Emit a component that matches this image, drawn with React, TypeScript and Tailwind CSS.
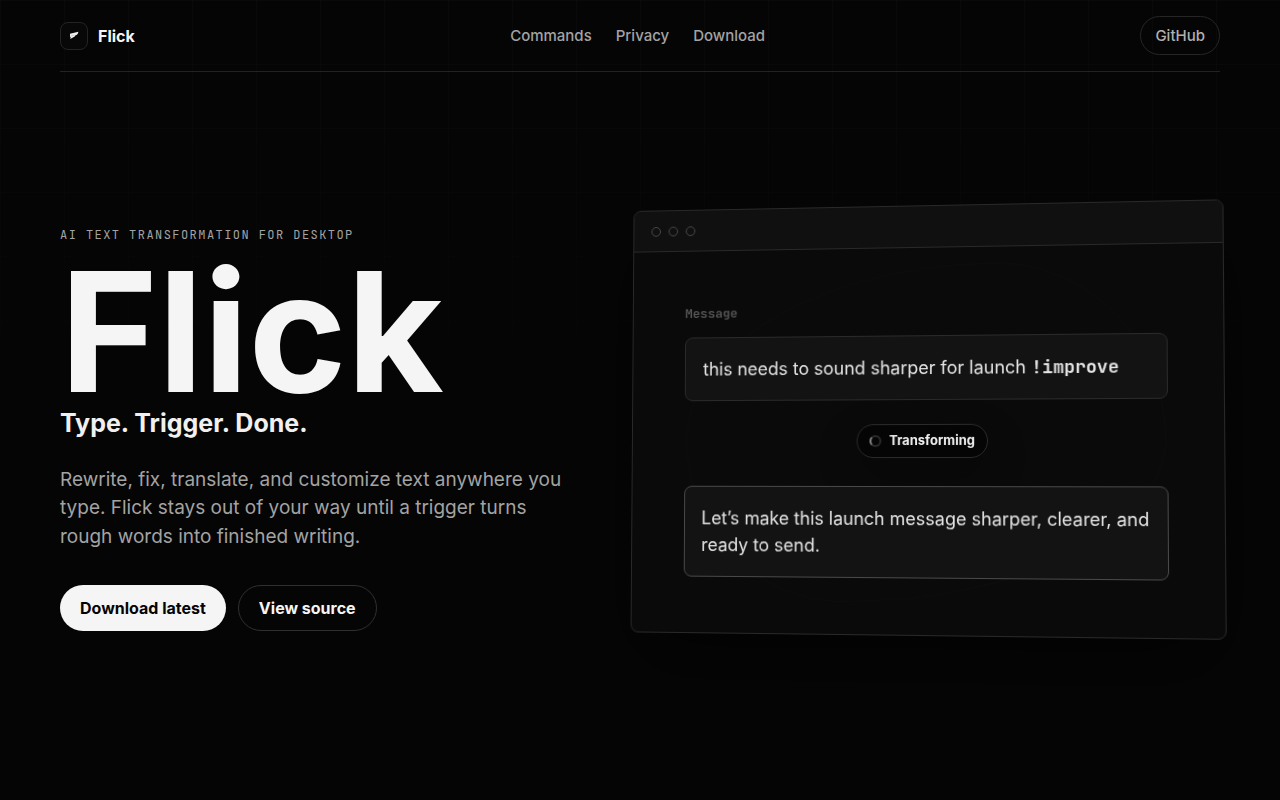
const NAV_LINKS = [
  { label: 'Commands', href: '#commands' },
  { label: 'Privacy', href: '#privacy' },
  { label: 'Download', href: '#download' },
];

const MONO = "font-['JetBrains_Mono','DejaVu_Sans_Mono','Liberation_Mono',monospace]";

function Header() {
  return (
    <header className="flex items-center justify-between h-[72px] border-b border-[#222222]">
      <a href="#top" className="flex items-center gap-2.5 font-bold text-base text-[#f5f5f5]">
        <span className="flex items-center justify-center w-7 h-7 rounded-lg border border-[#242424] bg-[#080808]">
          <svg width="10" height="10" viewBox="0 0 10 10" aria-hidden="true">
            <path d="M1 2.8 L9.4 0.8 C9.1 2.6 8.3 3.8 7 4.3 L6.2 4.5 C5.9 5.5 5.2 6.1 4 6.4 L1.2 8 L1.7 6 L1 5.8 Z" fill="#f0f0f0" />
            <path d="M1.6 5 L5.4 4" stroke="#aaaaaa" strokeWidth="0.5" />
          </svg>
        </span>
        Flick
      </a>
      <nav className="flex gap-6 text-[15px] leading-6 font-medium text-[#a3a3a3]">
        {NAV_LINKS.map((link) => (
          <a key={link.label} href={link.href} className="hover:text-white">
            {link.label}
          </a>
        ))}
      </nav>
      <a
        href="#github"
        className="flex items-center h-[39px] px-3.5 rounded-full border border-[#262626] text-[15px] leading-6 font-medium text-[#b0b0b0] hover:text-white"
      >
        GitHub
      </a>
    </header>
  );
}

function HeroCopy() {
  return (
    <div className="pt-[19px]">
      <p className={`${MONO} text-xs leading-[18px] tracking-[0.12em] uppercase text-[#a3a3a3]`}>
        AI text transformation for desktop
      </p>
      <h1 className="mt-[15px] text-[167px] leading-[144px] font-bold text-[#f5f5f5]">Flick</h1>
      <p className="mt-[3px] text-[25px] leading-[34px] font-bold text-[#f0f0f0]">Type. Trigger. Done.</p>
      <p className="mt-[26px] text-[19px] leading-normal text-[#a3a3a3]">
        Rewrite, fix, translate, and customize text anywhere you type. Flick stays out of your way
        until a trigger turns rough words into finished writing.
      </p>
      <div className="mt-[34px] flex flex-wrap gap-3 text-base font-bold">
        <a href="#download" className="flex items-center h-[46px] px-5 rounded-full bg-[#f5f5f5] text-[#050505]">
          Download latest
        </a>
        <a
          href="#source"
          className="flex items-center h-[46px] px-5 rounded-full border border-[#303030] text-[#f5f5f5]"
        >
          View source
        </a>
      </div>
    </div>
  );
}

function DemoWindow() {
  return (
    <div className="relative flex flex-col min-h-[431px] rounded-lg border border-[#292929] bg-[#0a0a0a] overflow-hidden shadow-[0_30px_80px_rgba(0,0,0,0.6)] [transform:perspective(1400px)_rotateX(2deg)_rotateY(-6deg)]">
      <div className="flex items-center gap-2 h-[42px] px-[18px] border-b border-[#292929] bg-[#101010]">
        {[0, 1, 2].map((dot) => (
          <span key={dot} className="w-2.5 h-2.5 rounded-full border border-[#4a4a4a]" />
        ))}
      </div>
      <div className="relative flex-1 flex flex-col justify-center px-[54px] pb-[3px]">
        <div className="absolute inset-x-14 top-4 bottom-8 rounded-[65%_35%_67%_33%/52%_52%_48%_48%] border border-white/2" />
        <p className={`${MONO} text-[13px] leading-5 font-bold text-[#555555]`}>Message</p>
        <p className="relative mt-3.5 px-[18px] py-[18px] rounded-lg border border-[#2b2b2b] bg-[#131313] text-lg leading-[27px] text-[#e5e5e5]">
          this needs to sound sharper for launch{' '}
          <span className={`${MONO} font-bold text-[#e5e5e5]`}>!improve</span>
        </p>
        <div className="relative self-center flex items-center gap-2 h-[34px] mt-6 px-3 rounded-full border border-[#2b2b2b] bg-[#050505] text-[13px] font-bold text-[#f0f0f0] shadow-[0_16px_40px_rgba(0,0,0,0.3)]">
          <span className="w-3 h-3 rounded-full border-2 border-[#2b2b2b] border-l-[#8a8a8a]" />
          Transforming
        </div>
        <p className="relative mt-7 px-[17px] py-[18px] rounded-lg border border-[#4a4a4a] bg-[#131313] text-lg leading-[27px] text-[#e5e5e5]">
          Let’s make this launch message sharper, clearer, and ready to send.
        </p>
      </div>
    </div>
  );
}

export default function App() {
  return (
    <div
      id="top"
      className="relative min-h-screen overflow-hidden bg-[#050505] font-['Inter','Liberation_Sans',sans-serif]"
    >
      {/* faint grid that fades out down the page */}
      <div className="absolute inset-0 bg-[linear-gradient(rgba(255,255,255,0.018)_1px,transparent_1px),linear-gradient(90deg,rgba(255,255,255,0.018)_1px,transparent_1px)] bg-[size:64px_64px] [mask-image:linear-gradient(to_bottom,black,transparent_60%)]" />
      <div className="relative mx-auto max-w-[1240px] px-10">
        <Header />
        <main className="grid grid-cols-1 lg:grid-cols-[508fr_596fr] gap-14 items-center min-h-[694px] py-10">
          <HeroCopy />
          <DemoWindow />
        </main>
      </div>
    </div>
  );
}
